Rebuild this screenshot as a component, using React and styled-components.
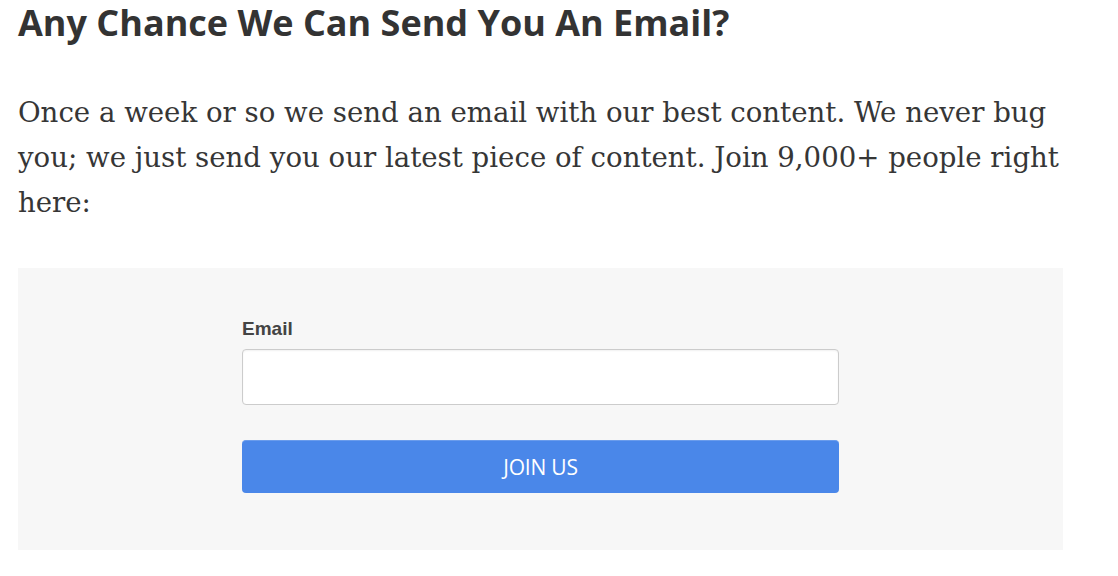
import React from "react";
import styled, { createGlobalStyle } from "styled-components";

const GlobalStyle = createGlobalStyle`
  html, body { margin: 0; padding: 0; background: #ffffff; }
  * { box-sizing: border-box; }
`;

const Page = styled.main`
  width: 1045px;
  margin-left: 18px;
`;

const Heading = styled.h1`
  margin: 0;
  font-family: "Open Sans", "Noto Sans", sans-serif;
  font-weight: 700;
  font-size: 36px;
  line-height: 45px;
  color: #333333;
`;

const Lead = styled.p`
  margin: 45px 0 0;
  font-family: "DejaVu Serif", "Liberation Serif", serif;
  font-size: 27.6px;
  line-height: 45px;
  color: #363636;
`;

const Panel = styled.section`
  margin-top: 43px;
  background: #f7f7f7;
  padding: 50px 0 57px;
  display: flex;
  justify-content: center;
`;

const Form = styled.form`
  width: 597px;
  display: flex;
  flex-direction: column;
`;

const Label = styled.label`
  font-family: "Liberation Sans", Arial, sans-serif;
  font-weight: 700;
  font-size: 19px;
  line-height: 22px;
  color: #444444;
  margin-bottom: 9px;
`;

const Input = styled.input`
  height: 56px;
  width: 100%;
  border: 1px solid #cccccc;
  border-radius: 4px;
  background: #ffffff;
  box-shadow: inset 0 1px 2px rgba(0, 0, 0, 0.06);
  font-size: 18px;
  padding: 0 12px;
  outline: none;
`;

const Button = styled.button`
  margin-top: 35px;
  height: 53px;
  width: 100%;
  border: none;
  border-top: 1px solid #6a9cec;
  border-radius: 4px;
  background: #4a87e9;
  color: #ffffff;
  font-family: "Open Sans", "Noto Sans", sans-serif;
  font-size: 21px;
  font-weight: 400;
  letter-spacing: -0.2px;
  cursor: pointer;
`;

export default function App() {
  return (
    <>
      <GlobalStyle />
      <Page>
        <Heading>Any Chance We Can Send You An Email?</Heading>
        <Lead>
          Once a week or so we send an email with our best content. We never bug
          you; we just send you our latest piece of content. Join 9,000+ people
          right here:
        </Lead>
        <Panel>
          <Form onSubmit={(e) => e.preventDefault()}>
            <Label htmlFor="email">Email</Label>
            <Input id="email" type="email" />
            <Button type="submit">JOIN US</Button>
          </Form>
        </Panel>
      </Page>
    </>
  );
}
